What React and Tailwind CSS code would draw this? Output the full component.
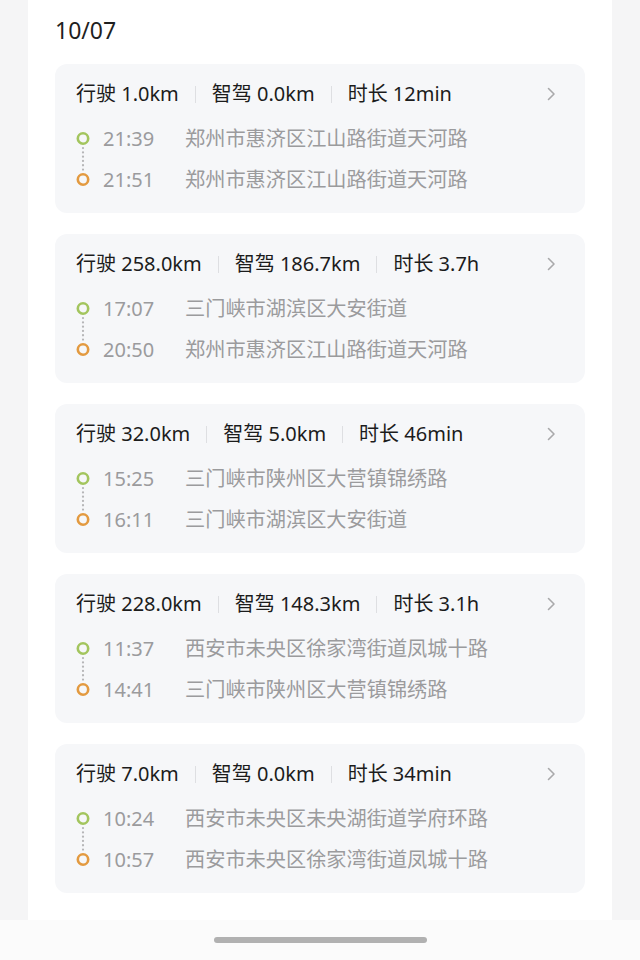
const trips = [
    { drive: '1.0km', smart: '0.0km', time: '12min', start: ['21:39', '郑州市惠济区江山路街道天河路'], end: ['21:51', '郑州市惠济区江山路街道天河路'] },
    { drive: '258.0km', smart: '186.7km', time: '3.7h', start: ['17:07', '三门峡市湖滨区大安街道'], end: ['20:50', '郑州市惠济区江山路街道天河路'] },
    { drive: '32.0km', smart: '5.0km', time: '46min', start: ['15:25', '三门峡市陕州区大营镇锦绣路'], end: ['16:11', '三门峡市湖滨区大安街道'] },
    { drive: '228.0km', smart: '148.3km', time: '3.1h', start: ['11:37', '西安市未央区徐家湾街道凤城十路'], end: ['14:41', '三门峡市陕州区大营镇锦绣路'] },
    { drive: '7.0km', smart: '0.0km', time: '34min', start: ['10:24', '西安市未央区未央湖街道学府环路'], end: ['10:57', '西安市未央区徐家湾街道凤城十路'] },
];

function Divider() {
    return <span className="mx-4 h-[17px] w-px bg-[#dedfe2]" />;
}

function TripCard({ trip }) {
    return (
        <div className="h-[149px] rounded-xl bg-[#f6f7f9] px-[21px] pt-4">
            <div className="flex h-[28px] items-center text-[20px] text-[#1c1c1c]">
                <span>行驶 {trip.drive}</span>
                <Divider />
                <span>智驾 {trip.smart}</span>
                <Divider />
                <span>时长 {trip.time}</span>
                <svg className="ml-auto mr-[5px] h-4 w-4 text-[#a9a9ab]" fill="none" stroke="currentColor" viewBox="0 0 16 16">
                    <path strokeLinecap="round" strokeLinejoin="round" strokeWidth="1.6" d="M5.5 2.5l5.5 5.5-5.5 5.5" />
                </svg>
            </div>
            <div className="mt-[10px] flex">
                <svg className="h-[82px] w-[14px] shrink-0" viewBox="0 0 14 82" fill="none">
                    <circle cx="7" cy="20.5" r="5.2" stroke="#a3c55e" strokeWidth="2.6" />
                    <line x1="7" y1="30" x2="7" y2="53" stroke="#b5b5b7" strokeWidth="2.2" strokeDasharray="0.1 4.2" strokeLinecap="round" />
                    <circle cx="7" cy="61.5" r="5.2" stroke="#e39a40" strokeWidth="2.6" />
                </svg>
                <div className="ml-[13px] flex flex-col text-[20px] text-[#9b9b9d]">
                    {[trip.start, trip.end].map(([t, addr]) => (
                        <div key={t} className="flex h-[41px] items-center">
                            <span className="w-[82px]">{t}</span>
                            <span className="text-[20.2px]">{addr}</span>
                        </div>
                    ))}
                </div>
            </div>
        </div>
    );
}

export default function App() {
    return (
        <div
            className="flex min-h-[960px] flex-col bg-[#f5f5f6]"
            style={{ fontFamily: '"Noto Sans", "Noto Sans CJK SC", sans-serif' }}
        >
            <div className="mx-[28px] h-[920px] bg-white px-[27px]">
                <div className="pt-[14px] text-[23px] leading-[32px] text-[#1f1f1f]">10/07</div>
                <div className="mt-[18px] flex flex-col gap-[21px]">
                    {trips.map((trip, i) => (
                        <TripCard key={i} trip={trip} />
                    ))}
                </div>
            </div>
            <div className="flex h-[40px] items-center justify-center bg-[#fbfbfb]">
                <div className="h-[6px] w-[213px] rounded-full bg-[#b1b1b1]" />
            </div>
        </div>
    );
}
